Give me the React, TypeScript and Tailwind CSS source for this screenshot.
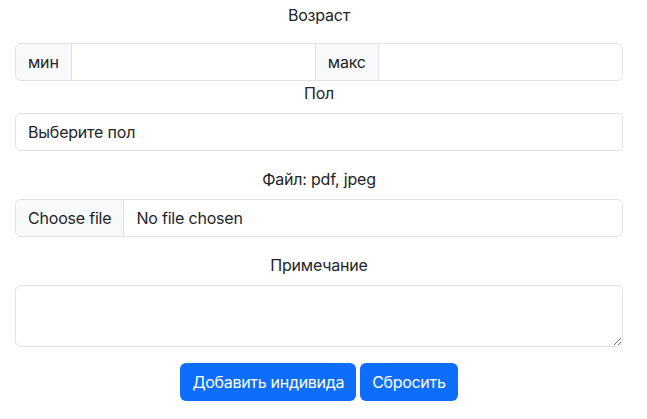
import { useState } from 'react'

const label = 'block text-center text-[16px] leading-6 text-[#212529]'
const field = 'border border-[#dee2e6] bg-white text-[16px] leading-6 text-[#212529] outline-none'
const addon = 'flex items-center px-3 bg-[#f8f9fa] border border-[#dee2e6] text-[16px] leading-6 text-[#212529]'

export default function App() {
  const [minAge, setMinAge] = useState('')
  const [maxAge, setMaxAge] = useState('')
  const [sex, setSex] = useState('')
  const [note, setNote] = useState('')

  const reset = () => {
    setMinAge('')
    setMaxAge('')
    setSex('')
    setNote('')
  }

  return (
    <div className="min-h-screen bg-white pl-[15px] pr-[24px] pt-[3px] font-['Inter','Liberation_Sans',sans-serif] tracking-[-0.2px] text-[#212529]">
      <form className="flex flex-col" onSubmit={(e) => e.preventDefault()}>
        {/* --- ВОЗРАСТ --- */}
        <label className={`${label} mb-4`}>Возраст</label>
        <div className="flex h-[38px]">
          <span className={`${addon} rounded-l-[6px]`}>мин</span>
          <input
            value={minAge}
            onChange={(e) => setMinAge(e.target.value)}
            className={`${field} flex-1 min-w-0 -ml-px px-3`}
          />
          <span className={`${addon} -ml-px`}>макс</span>
          <input
            value={maxAge}
            onChange={(e) => setMaxAge(e.target.value)}
            className={`${field} flex-1 min-w-0 -ml-px px-3 rounded-r-[6px]`}
          />
        </div>

        {/* --- ПОЛ --- */}
        <label className={`${label} mb-2`}>Пол</label>
        <select
          value={sex}
          onChange={(e) => setSex(e.target.value)}
          className={`${field} appearance-none h-[38px] px-3 rounded-[6px]`}
        >
          <option value="">Выберите пол</option>
          <option value="m">Мужской</option>
          <option value="f">Женский</option>
        </select>

        {/* --- ФАЙЛ --- */}
        <label className={`${label} mt-4 mb-2`}>Файл: pdf, jpeg</label>
        <div className="flex h-[38px] rounded-[6px] border border-[#dee2e6] overflow-hidden">
          <span className="flex items-center px-3 bg-[#f8f9fa] border-r border-[#dee2e6] text-[16px]">Choose file</span>
          <span className="flex items-center px-3 text-[16px]">No file chosen</span>
        </div>

        {/* --- ПРИМЕЧАНИЕ --- */}
        <label className={`${label} mt-4 mb-2`}>Примечание</label>
        <textarea
          rows={2}
          value={note}
          onChange={(e) => setNote(e.target.value)}
          className={`${field} h-[62px] px-3 py-[6px] rounded-[6px]`}
        />

        <div className="flex justify-center gap-1 mt-4 tracking-[-0.3px]">
          <button type="submit" className="h-[38px] px-3 rounded-[6px] bg-[#0d6efd] text-white text-[16px]">
            Добавить индивида
          </button>
          <button type="button" onClick={reset} className="h-[38px] px-3 rounded-[6px] bg-[#0d6efd] text-white text-[16px]">
            Сбросить
          </button>
        </div>
      </form>
    </div>
  )
}
